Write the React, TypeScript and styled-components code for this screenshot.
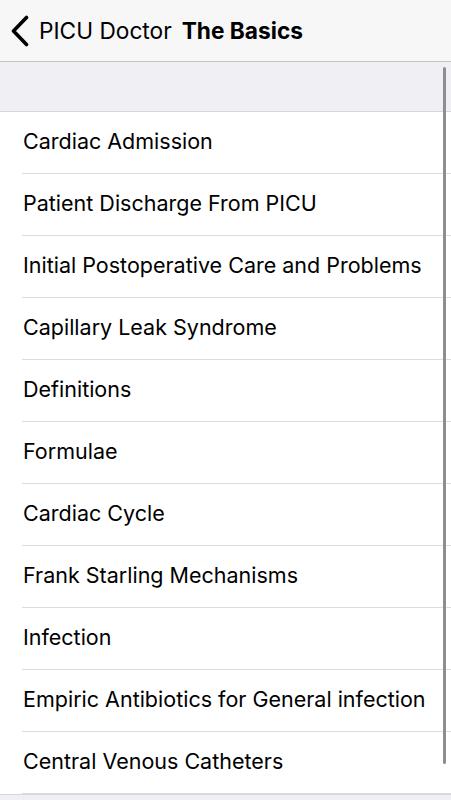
import React from 'react';
import styled, { createGlobalStyle } from 'styled-components';

const GlobalStyle = createGlobalStyle`
  html, body {
    margin: 0;
    padding: 0;
    background: #ffffff;
  }
  body {
    font-family: Inter, "Liberation Sans", sans-serif;
    color: #000;
    overflow: hidden;
  }
`;

const Screen = styled.div`
  width: 451px;
  height: 800px;
  display: flex;
  flex-direction: column;
  overflow: hidden;
  position: relative;
`;

const NavBar = styled.div`
  height: 62px;
  flex-shrink: 0;
  display: flex;
  align-items: center;
  background: #f7f7f8;
  border-bottom: 1px solid #c4c4c6;
  box-sizing: border-box;
  padding-left: 9px;
`;

const BackButton = styled.div`
  display: flex;
  align-items: center;
  gap: 10px;
  font-size: 22.7px;
  color: #000;
`;

const NavTitle = styled.div`
  font-size: 22.7px;
  font-weight: 700;
  margin-left: 10px;
`;

const SectionHeader = styled.div`
  height: 50px;
  flex-shrink: 0;
  background: #efeff4;
  border-bottom: 1px solid #d6d6da;
  box-sizing: border-box;
`;

const List = styled.ul`
  list-style: none;
  margin: 0;
  padding: 0;
  flex: 1;
  background: #fff;
`;

const Row = styled.li`
  height: 62px;
  box-sizing: border-box;
  display: flex;
  align-items: center;
  padding: 0 0 4px 23px;
  font-size: 21.5px;
  position: relative;
  &::after {
    content: '';
    position: absolute;
    left: 22px;
    right: 0;
    bottom: 0;
    height: 1px;
    background: #dcdcdf;
  }
`;

const Footer = styled.div`
  height: 7px;
  background: #efeff4;
  border-top: 1px solid #d6d6da;
`;

const ScrollBar = styled.div`
  position: absolute;
  left: 443px;
  top: 67px;
  width: 3px;
  height: 697px;
  border-radius: 2px;
  background: #8e8e90;
`;

const items = [
  'Cardiac Admission',
  'Patient Discharge From PICU',
  'Initial Postoperative Care and Problems',
  'Capillary Leak Syndrome',
  'Definitions',
  'Formulae',
  'Cardiac Cycle',
  'Frank Starling Mechanisms',
  'Infection',
  'Empiric Antibiotics for General infection',
  'Central Venous Catheters',
];

const App: React.FC = () => {
  return (
    <Screen>
      <GlobalStyle />
      <NavBar>
        <BackButton>
          <svg width="20" height="32" viewBox="0 0 20 32">
            <path d="M17.5 2.5 L4.5 16 L17.5 29.5" fill="none" stroke="#000" strokeWidth="3.6" strokeLinecap="round" strokeLinejoin="round" />
          </svg>
          PICU Doctor
        </BackButton>
        <NavTitle>The Basics</NavTitle>
      </NavBar>
      <SectionHeader />
      <List>
        {items.map((item) => (
          <Row key={item}>{item}</Row>
        ))}
      </List>
      <Footer />
      <ScrollBar />
    </Screen>
  );
};

export default App;
